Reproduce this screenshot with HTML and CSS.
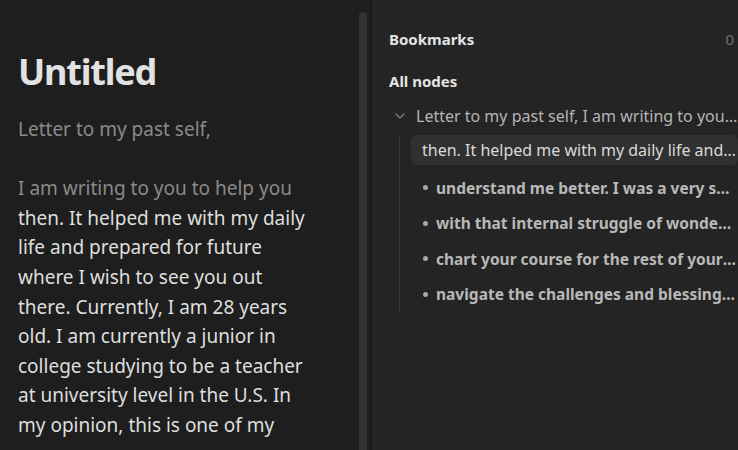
FILE: index.html
```html
<!DOCTYPE html>
<html>
<head>
<meta charset="utf-8">
<link rel="stylesheet" href="styles.css">
</head>
<body>
<div class="app">
  <main class="editor">
    <div class="doc">
      <h1 class="title">Untitled</h1>
      <p class="line muted">Letter to my past self,</p>
      <p class="line empty">&nbsp;</p>
      <p class="line"><span class="muted">I am writing to you to help you</span><br>then. It helped me with my daily life and prepared for future where I wish to see you out there. Currently, I am 28 years old. I am currently a junior in college studying to be a teacher at university level in the U.S. In my opinion, this is one of my</p>
    </div>
    <div class="scrollbar"><div class="thumb"></div></div>
  </main>
  <aside class="side">
    <div class="section-head">
      <span class="section-title">Bookmarks</span>
      <span class="count">0</span>
    </div>
    <div class="section-head nodes-head">
      <span class="section-title">All nodes</span>
    </div>
    <div class="tree">
      <div class="node root">
        <svg class="chev" width="12" height="12" viewBox="0 0 12 12"><path d="M1.5 3.5 L6 8 L10.5 3.5" fill="none" stroke="#7a7a7a" stroke-width="1.4"/></svg>
        <span class="node-text">Letter to my past self, I am writing to you to help you</span>
      </div>
      <div class="children">
        <div class="node active"><span class="node-text">then. It helped me with my daily life and prepared for future</span></div>
        <div class="node leaf"><span class="dot"></span><span class="node-text bold">understand me better. I was a very shy person</span></div>
        <div class="node leaf"><span class="dot"></span><span class="node-text bold">with that internal struggle of wondering</span></div>
        <div class="node leaf"><span class="dot"></span><span class="node-text bold">chart your course for the rest of your life</span></div>
        <div class="node leaf"><span class="dot"></span><span class="node-text bold">navigate the challenges and blessings of life</span></div>
      </div>
    </div>
  </aside>
</div>
</body>
</html>
```

FILE: styles.css
```css
html, body {
  margin: 0;
  padding: 0;
  height: 100%;
  background: #1e1e1e;
  overflow: hidden;
}
body {
  font-family: "Noto Sans", "Open Sans", sans-serif;
  color: #dcdcdc;
}
.app {
  display: flex;
  height: 450px;
  width: 738px;
}
.editor {
  width: 371px;
  flex: none;
  display: flex;
  background: #1e1e1e;
  border-right: 1px solid #191919;
}
.doc {
  flex: 1;
  padding: 47px 0 0 18px;
  min-width: 0;
}
.title {
  margin: 0 0 18px;
  font-size: 36px;
  font-weight: 700;
  color: #e2e2e2;
  line-height: 50px;
  letter-spacing: -1.2px;
}
.line {
  margin: 0;
  font-size: 19px;
  line-height: 29.6px;
  width: 300px;
  color: #dedede;
}
.muted {
  color: #8a8a8a;
}
.scrollbar {
  width: 12px;
  flex: none;
  padding: 12px 4px 0 0;
  display: flex;
  justify-content: flex-end;
}
.thumb {
  width: 8px;
  height: 460px;
  background: #333333;
  border-radius: 4px;
}
.side {
  flex: 1;
  min-width: 0;
  background: #242424;
  padding: 26px 0 0 17px;
  overflow: hidden;
}
.section-head {
  display: flex;
  justify-content: space-between;
  align-items: center;
  height: 26px;
  padding-right: 4px;
}
.nodes-head {
  margin-top: 16px;
}
.section-title {
  font-size: 15px;
  font-weight: 700;
  color: #e4e4e4;
}
.count {
  font-size: 15px;
  color: #707070;
}
.tree {
  margin-top: 7px;
}
.node {
  display: flex;
  align-items: center;
  height: 30px;
  white-space: nowrap;
  overflow: hidden;
}
.node-text {
  overflow: hidden;
  text-overflow: ellipsis;
  font-size: 16px;
  color: #b4b4b4;
  min-width: 0;
}
.root .chev {
  flex: none;
  margin: 0 10px 0 5px;
}
.children {
  margin-left: 10px;
  border-left: 1px solid #363636;
  padding-left: 11px;
  padding-bottom: 0;
}
.node.active {
  background: #303030;
  border-radius: 6px;
  padding-left: 11px;
  margin-top: 4px;
  margin-bottom: 5px;
}
.node.active .node-text {
  color: #dadada;
}
.node.leaf {
  height: 35.5px;
  padding-left: 12px;
}
.dot {
  width: 5px;
  height: 5px;
  border-radius: 50%;
  background: #a8a8a8;
  flex: none;
  margin-right: 8px;
}
.bold {
  font-size: 15.5px;
  font-weight: 700;
  color: #b8b8b8;
}
```
